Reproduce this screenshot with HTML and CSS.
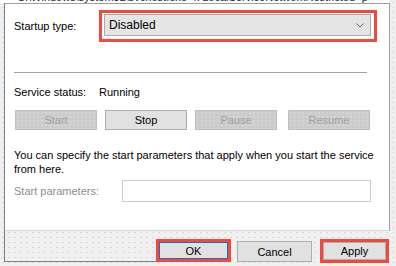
FILE: index.html
```html
<!DOCTYPE html>
<html>
<head>
<meta charset="utf-8">
<link rel="stylesheet" href="styles.css">
</head>
<body>
<div class="topline"><span>C:\Windows\system32\svchost.exe -k LocalServiceNetworkRestricted -p</span></div>
<div class="frame">
  <div class="page">
    <div class="row-startup">
      <span class="label">Startup type:</span>
      <div class="highlight combo-hl">
        <div class="combo">
          <span>Disabled</span>
          <svg class="chev" width="8" height="5" viewBox="0 0 8 5"><polyline points="0.5,0.5 4,4 7.5,0.5" fill="none" stroke="#5a5a5a" stroke-width="1"/></svg>
        </div>
      </div>
    </div>
    <div class="sep"></div>
    <div class="row-status">
      <span class="label">Service status:</span>
      <span>Running</span>
    </div>
    <div class="svc-buttons">
      <button class="btn disabled">Start</button>
      <button class="btn">Stop</button>
      <button class="btn disabled">Pause</button>
      <button class="btn disabled resume">Resume</button>
    </div>
    <p class="note">You can specify the start parameters that apply when you start the service from here.</p>
    <div class="row-params">
      <span class="label muted">Start parameters:</span>
      <div class="input"></div>
    </div>
  </div>
  <div class="footer">
    <div class="spacer"></div>
    <div class="highlight ok-hl"><button class="btn dlg default">OK</button></div>
    <button class="btn dlg cancel">Cancel</button>
    <div class="highlight apply-hl"><button class="btn dlg">Apply</button></div>
  </div>
</div>
</body>
</html>
```

FILE: styles.css
```css
html, body {
  margin: 0;
  padding: 0;
}
body {
  width: 396px;
  height: 266px;
  overflow: hidden;
  background-color: #f0f0f0;
  background-image: radial-gradient(circle, #dadada 0.6px, transparent 0.8px);
  background-size: 6px 5px;
  font-family: "Liberation Sans", Arial, sans-serif;
  font-size: 11px;
  color: #000;
}
.topline {
  height: 3px;
  overflow: hidden;
  display: flex;
  align-items: flex-end;
  padding-left: 17px;
  white-space: nowrap;
  background: #fff;
  width: 372px;
}
.topline span {
  line-height: 12px;
  font-size: 11px;
  color: #1a1a3a;
}
.frame {
  margin-left: 4px;
  width: 385px;
  border-left: 1px solid #808080;
}
.page {
  background: #fff;
  border-top: 1px solid #a0a0a0;
  border-right: 1px solid #a0a0a0;
  border-bottom: 1px solid #d8d8d8;
  padding-left: 9px;
  box-sizing: border-box;
  height: 228px;
}
.label {
  width: 85px;
  flex: none;
}
.row-startup {
  display: flex;
  align-items: center;
  padding-top: 6px;
}
.highlight {
  border: 3px solid #f4483a;
  box-sizing: border-box;
}
.combo-hl {
  padding: 1px 3px 3px 2px;
}
.combo {
  width: 267px;
  height: 22px;
  box-sizing: border-box;
  background: #e5e5e5;
  border: 1px solid #adadad;
  display: flex;
  align-items: center;
  justify-content: space-between;
  padding: 0 6px 0 4px;
  font-size: 12px;
}
.sep {
  width: 353px;
  height: 1px;
  background: #a0a0a0;
  margin-top: 30px;
}
.row-status {
  display: flex;
  align-items: center;
  margin-top: 12px;
  line-height: 15px;
}
.svc-buttons {
  display: flex;
  gap: 8px;
  margin-top: 10px;
  padding-left: 1px;
}
.btn {
  font-family: "Liberation Sans", Arial, sans-serif;
  font-size: 11px;
  width: 82px;
  height: 20px;
  box-sizing: border-box;
  border: 1px solid #adadad;
  background: #e1e1e1;
  color: #000;
  padding: 0;
  margin: 0;
}
.btn.disabled {
  background-color: #cccccc;
  background-image: radial-gradient(circle, #dedede 0.6px, transparent 0.8px);
  background-size: 4px 4px;
  border-color: #bfbfbf;
  color: #a0a0a0;
}
.btn.resume {
  margin-left: 3px;
}
.note {
  margin: 18px 0 0;
  line-height: 14px;
  width: 370px;
}
.row-params {
  display: flex;
  align-items: center;
  margin-top: 4px;
}
.muted {
  color: #8d8d8d;
  width: 108px;
}
.input {
  width: 249px;
  height: 22px;
  box-sizing: border-box;
  border: 1px solid #cccccc;
  background: #fff;
}
.footer {
  display: flex;
  align-items: flex-start;
  height: 31px;
}
.spacer {
  flex: 1;
  align-self: stretch;
  border-bottom: 1px solid #808080;
}
.ok-hl {
  margin-top: 8px;
  width: 75px;
  height: 23px;
}
.btn.dlg {
  width: 100%;
  height: 100%;
}
.btn.default {
  border: 1px solid #0078d7;
}
.cancel.btn.dlg {
  width: 75px;
  height: 21px;
  margin-top: 10px;
  margin-left: 6px;
}
.apply-hl {
  margin-top: 8px;
  margin-left: 8px;
  margin-right: 1px;
  width: 69px;
  height: 24px;
}
```
